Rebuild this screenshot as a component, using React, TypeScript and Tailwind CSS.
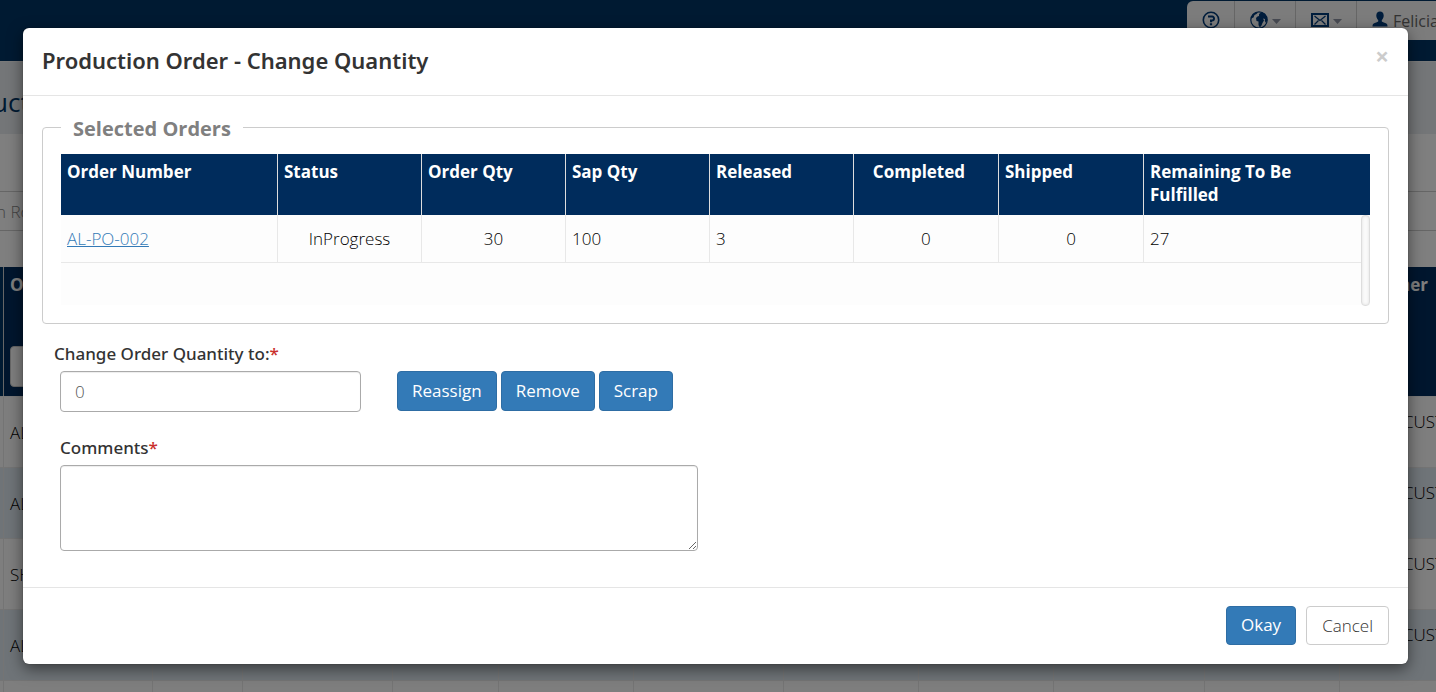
import React from "react";

const columns = [
  { label: "Order Number", width: "w-[16.54%]", head: "text-left", cell: "text-left" },
  { label: "Status", width: "w-[11%]", head: "text-left", cell: "text-center" },
  { label: "Order Qty", width: "w-[11%]", head: "text-left", cell: "text-center" },
  { label: "Sap Qty", width: "w-[11%]", head: "text-left", cell: "text-left" },
  { label: "Released", width: "w-[11%]", head: "text-left", cell: "text-left" },
  { label: "Completed", width: "w-[11.08%]", head: "text-center pr-5", cell: "text-center" },
  { label: "Shipped", width: "w-[11.08%]", head: "text-left", cell: "text-center" },
  { label: "Remaining To Be Fulfilled", width: "w-[17.3%]", head: "text-left pr-12", cell: "text-left" },
];

const order = ["AL-PO-002", "InProgress", "30", "100", "3", "0", "0", "27"];

const listRows = ["AL", "AL", "SH", "AL", ""];

const primary =
  "rounded border border-[#2e6da4] bg-[#337ab7] px-[14px] leading-6 font-normal text-white";

const labelStyle = "block font-['Noto_Sans','Open_Sans',sans-serif] font-medium";

function QuestionIcon() {
  return (
    <svg width="18" height="18" viewBox="0 0 18 18" fill="none" stroke="#003a78" aria-hidden="true">
      <circle cx="9" cy="9" r="7.7" strokeWidth="1.6" />
      <path d="M6 5.6h4.2a1.8 1.8 0 0 1 1.8 1.9c0 1.1-.8 1.9-1.9 1.9H9v1.8" strokeWidth="2" />
      <path d="M9 12.3v1.9" strokeWidth="2.2" />
    </svg>
  );
}

function GlobeIcon() {
  return (
    <svg width="18" height="18" viewBox="0 0 18 18" aria-hidden="true">
      <circle cx="9" cy="9" r="8.2" fill="none" stroke="#003a78" strokeWidth="1.2" />
      <path
        fill="#003a78"
        d="M1 7.500 2.500 3.500 5.500 1.200l2.500.3L6.500 3 4.500 4 3.500 6.500zM6 7l1.500-1.500L9 5V3l2.500-1.800 3 1.300L16.500 5.500l.8 3.500-1.300 3-1.200-2 .2-2-2-.5 1 2-1.500 2.500-1.500 3.500-1.500.5-1-2V10.500L6.500 10z"
      />
    </svg>
  );
}

function MailIcon() {
  return (
    <svg width="18" height="14" viewBox="0 0 18 14" fill="none" stroke="#003a78" aria-hidden="true">
      <rect x="1" y="1" width="16" height="12" strokeWidth="2" />
      <path d="M3.5 3 9 7.5 14.5 3M3.5 11.500l4-4M14.500 11.500l-4-4" strokeWidth="1.2" />
    </svg>
  );
}

function UserIcon() {
  return (
    <svg width="16" height="16" viewBox="0 0 16 16" fill="#003a78" aria-hidden="true">
      <path d="M8 .5c2.200 0 3.700 1.600 3.700 4 0 1.900-.8 3.600-1.900 4.500v1.400c.7.700 3.200 1.200 4.500 2 .8.500 1.200 1.300 1.200 3.100H.5c0-1.800.4-2.600 1.200-3.100 1.300-.8 3.800-1.300 4.500-2V9C5.100 8.100 4.300 6.400 4.300 4.500c0-2.400 1.500-4 3.700-4z" />
    </svg>
  );
}

function Caret() {
  return (
    <svg width="9" height="5" viewBox="0 0 9 5" fill="#8f95a5" aria-hidden="true">
      <path d="M0 0h9L4.500 5z" />
    </svg>
  );
}

function ListPage() {
  return (
    <div className="h-screen overflow-hidden bg-white" aria-hidden="true">
      <div className="flex h-[61px] justify-end bg-[#003464] pt-px">
        <div className="flex h-[39px] w-[249px] overflow-hidden rounded-tl-md bg-[#f8f8f8]">
          <div className="flex w-12 shrink-0 justify-center border-r border-[#ccc] pt-[10px]">
            <QuestionIcon />
          </div>
          <div className="flex w-[61px] shrink-0 gap-1 border-r border-[#ccc] pt-[10px] pl-[15px]">
            <GlobeIcon />
            <span className="pt-2"><Caret /></span>
          </div>
          <div className="flex w-[61px] shrink-0 gap-1 border-r border-[#ccc] pt-3 pl-[15px]">
            <MailIcon />
            <span className="pt-[6px]"><Caret /></span>
          </div>
          <div className="flex shrink-0 gap-[5px] pt-[10px] pl-[15px]">
            <UserIcon />
            <span className="text-base leading-5 font-normal text-[#666]">Felicia</span>
          </div>
        </div>
      </div>
      <div className="h-[73px] border-t border-[#f5f5f5] bg-[#e9ecf0] pt-6">
        <p className="-ml-2 text-[26px] leading-8 font-normal text-[#003464]">uct</p>
      </div>
      <div className="h-[133px] pt-[57px]">
        <div className="-ml-1 h-10 border-y border-[#ccc] leading-10 text-[#888]">n Ro</div>
      </div>
      <div className="flex h-[129px] justify-between border-l-[3px] border-[#003464] bg-[#002c5c] text-white">
        <div className="w-12 border-l border-[#ccc] pt-[6px] pl-[6px]">
          <p className="font-bold">Or</p>
          <div className="mt-[50px] h-[41px] rounded border border-[#ccc] bg-white" />
        </div>
        <p className="pt-[6px] pr-2 font-bold">Customer</p>
      </div>
      <div className="border-t border-[#f5f5f5]">
        {listRows.map((name, i) => (
          <div
            key={i}
            className={`flex h-[71px] justify-between border-b border-[#e8e8e8] pl-[3px] ${i % 2 ? "bg-[#dfe8f0]" : "bg-[#fdfdfd]"}`}
          >
            <div className="flex w-[150px] items-center border-x border-[#e8e8e8] pl-[6px] text-black">{name}</div>
            <div className="w-[90px] border-r border-[#e8e8e8]" />
            <div className="w-[150px] border-r border-[#e8e8e8]" />
            <div className="w-[106px] border-r border-[#e8e8e8]" />
            <div className="w-[135px] border-r border-[#e8e8e8]" />
            <div className="w-[150px] border-r border-[#e8e8e8]" />
            <div className="w-[135px] border-r border-[#e8e8e8]" />
            <div className="w-[135px] border-r border-[#e8e8e8]" />
            <div className="w-[151px] border-r border-[#e8e8e8]" />
            <div className="w-[135px] border-r border-[#e8e8e8]" />
            <div className="w-24 overflow-hidden pt-[13px] pl-[63px] text-black">{name && "CUST"}</div>
          </div>
        ))}
      </div>
    </div>
  );
}

export default function App() {
  return (
    <div className="relative font-['Open_Sans','Noto_Sans',sans-serif] text-[17px] leading-[23px] font-light text-[#333]">
      <ListPage />
      <div className="absolute inset-0 bg-black/50 pt-7 pr-7 pl-[23px]">
        <div
          role="dialog"
          aria-labelledby="dialog-title"
          className="rounded-md bg-white shadow-[0_5px_15px_rgba(0,0,0,0.5),0_0_1px_rgba(0,0,0,0.6)]"
        >
          <header className="flex items-start justify-between border-b border-[#e5e5e5] px-[19px] pt-[17px] pb-5">
            <h1
              id="dialog-title"
              className="font-['Noto_Sans','Open_Sans',sans-serif] text-[22px] leading-[30px] font-semibold"
            >
              Production Order - Change Quantity
            </h1>
            <button type="button" aria-label="Close" className="text-[24px] leading-[22px] font-bold text-[#ccc]">
              ×
            </button>
          </header>

          <div className="px-[19px] pt-[18px] pb-9">
            <fieldset className="rounded border border-[#ccc] px-[18px] pb-[18px]">
              <legend className="px-3 pt-1 text-xl leading-[22px] font-bold text-[#808080]">Selected Orders</legend>
              <div className="relative mt-[14px] bg-[#fdfdfd] pb-[42px]">
                <table className="w-full table-fixed border-collapse">
                  <thead>
                    <tr className="h-[61px] bg-[#002c5c] align-top text-white">
                      {columns.map((c) => (
                        <th
                          key={c.label}
                          scope="col"
                          className={`border-r border-[#ddd] px-[6px] pt-[6px] font-bold last:border-r-0 ${c.width} ${c.head}`}
                        >
                          {c.label}
                        </th>
                      ))}
                    </tr>
                  </thead>
                  <tbody>
                    <tr className="h-[47px] border-b border-[#e8e8e8] text-black">
                      {order.map((value, i) => (
                        <td key={i} className={`border-r border-[#e8e8e8] px-[6px] last:border-r-0 ${columns[i].cell}`}>
                          {i === 0 ? (
                            <a href="#order" className="text-[#337ab7] underline">
                              {value}
                            </a>
                          ) : (
                            value
                          )}
                        </td>
                      ))}
                    </tr>
                  </tbody>
                </table>
                <div className="absolute top-[61px] right-0 -bottom-px w-[9px] rounded border border-[#ddd] bg-[#fafafa] shadow-[inset_0_0_3px_#ddd]" />
              </div>
            </fieldset>

            <div className="mt-[18px] pl-3">
              <label htmlFor="quantity" className={labelStyle}>
                Change Order Quantity to:<span className="text-[#c9302c]">*</span>
              </label>
              <div className="mt-[6px] flex items-start gap-9 pl-[6px]">
                <input
                  id="quantity"
                  type="text"
                  defaultValue="0"
                  className="h-[41px] w-[301px] rounded border border-[#aaa] px-[14px] text-[#555] shadow-[inset_0_1px_1px_rgba(0,0,0,0.075)]"
                />
                <div className="flex gap-1">
                  <button type="button" className={`h-10 ${primary}`}>Reassign</button>
                  <button type="button" className={`h-10 ${primary}`}>Remove</button>
                  <button type="button" className={`h-10 ${primary}`}>Scrap</button>
                </div>
              </div>
            </div>

            <div className="mt-6 pl-[18px]">
              <label htmlFor="comments" className={labelStyle}>
                Comments<span className="text-[#c9302c]">*</span>
              </label>
              <textarea
                id="comments"
                className="mt-[6px] block h-[86px] w-[638px] max-w-full rounded border border-[#aaa] px-[14px] py-2 shadow-[inset_0_1px_1px_rgba(0,0,0,0.075)]"
              />
            </div>
          </div>

          <footer className="flex justify-end gap-[10px] border-t border-[#e5e5e5] px-[19px] pt-[18px] pb-[19px]">
            <button type="button" className={`h-[39px] ${primary}`}>Okay</button>
            <button type="button" className="h-[39px] rounded border border-[#ccc] bg-white px-[15px] text-[#333]">
              Cancel
            </button>
          </footer>
        </div>
      </div>
    </div>
  );
}
